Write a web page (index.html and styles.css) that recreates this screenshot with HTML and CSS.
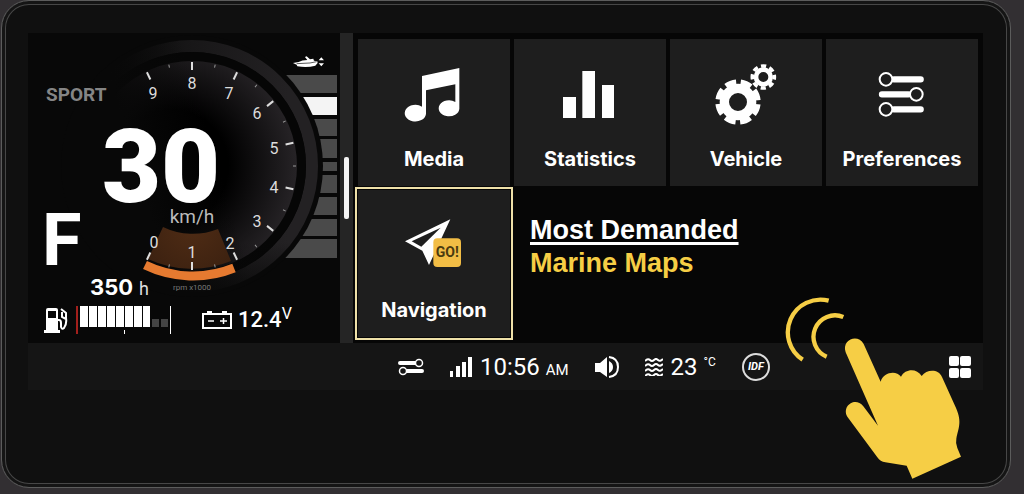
FILE: index.html
```html
<!DOCTYPE html>
<html lang="en">
<head>
  <meta charset="UTF-8">
  <meta name="viewport" content="width=device-width, initial-scale=1">
  <title>Marine Display</title>
  <link rel="stylesheet" href="styles.css">
</head>
<body>

<div class="device">
  <div class="screen">
    <div class="main">

      <!-- Instrument cluster -->
      <section class="cluster">
        <svg class="gauge" viewBox="-164 -133 312 310">
          <defs>
            <radialGradient id="dial" gradientUnits="userSpaceOnUse" cx="-20" cy="0" r="125">
              <stop offset="0.45" stop-color="#000"/>
              <stop offset="1" stop-color="#262326"/>
            </radialGradient>
            <linearGradient id="ring" x1="0" x2="1" y1="0" y2="0">
              <stop offset="0.15" stop-color="#080808"/>
              <stop offset="0.5" stop-color="#181718"/>
              <stop offset="0.9" stop-color="#232123"/>
            </linearGradient>
            <linearGradient id="fade" x1="0" x2="1" y1="0.3" y2="0">
              <stop offset="0.2" stop-color="#080808"/>
              <stop offset="0.5" stop-color="#080808" stop-opacity="0"/>
            </linearGradient>
            <linearGradient id="fadeBottom" x1="0" x2="0" y1="0" y2="1">
              <stop offset="0.8" stop-color="#080808" stop-opacity="0"/>
              <stop offset="1" stop-color="#080808" stop-opacity="0.8"/>
            </linearGradient>
            <radialGradient id="redzone" gradientUnits="userSpaceOnUse" cx="0" cy="60" r="55">
              <stop offset="0" stop-color="#4f2c15"/>
              <stop offset="1" stop-color="#3c2110"/>
            </radialGradient>
          </defs>

          <!-- trim levels -->
          <g fill="#4a4a4a">
            <rect x="60" y="-91" width="85" height="18"/>
            <rect x="60" y="-69" width="85" height="18" fill="#f4f4f4"/>
            <rect x="60" y="-47" width="85" height="17"/>
            <rect x="60" y="-27" width="85" height="19"/>
            <rect x="60" y="-4" width="85" height="9"/>
            <rect x="60" y="9" width="85" height="18"/>
            <rect x="60" y="31" width="85" height="18"/>
            <rect x="60" y="53" width="85" height="17"/>
            <rect x="60" y="73" width="85" height="19"/>
          </g>
          <g transform="translate(-164 -134) scale(0.3333)" fill="#fff">
            <path d="M795 93 L812 90 Q822 84 838 84 L831 75 L836 73 L846 82 L856 80 L858 86 L868 88 L869 93 L862 101 Q838 108 808 103 L806 98 Z"/>
            <path d="M806 95 L846 93 L866 89" stroke="#080808" stroke-width="2" fill="none"/>
            <path d="M872 85 L880 76 L888 85 Z M872 94 L880 103 L888 94 Z"/>
          </g>

          <!-- dial -->
          <circle r="131" fill="#080808"/>
          <circle r="120" fill="none" stroke="url(#ring)" stroke-width="12"/>
          <circle r="114" fill="#060606"/>
          <circle r="105" fill="url(#dial)"/>
          <circle r="127" fill="url(#fade)"/>
          <circle r="127" fill="url(#fadeBottom)"/>
          <path d="M-29 61 A68 68 0 0 0 26 63 L39 95 A103 103 0 0 1 -44 93 Z" fill="url(#redzone)"/>
          <path d="M-47 99 A110 110 0 0 0 42 102" fill="none" stroke="#e67a30" stroke-width="9"/>

          <g stroke="#ddd" stroke-width="2">
            <path d="M0 -104 V-96" transform="rotate(-25.7)"/>
            <path d="M0 -104 V-96"/>
            <path d="M0 -104 V-96" transform="rotate(25.7)"/>
            <path d="M0 -104 V-96" transform="rotate(51.4)"/>
            <path d="M0 -104 V-96" transform="rotate(77.1)"/>
            <path d="M0 -104 V-96" transform="rotate(102.9)"/>
            <path d="M0 -104 V-96" transform="rotate(128.6)"/>
            <path d="M0 -104 V-96" transform="rotate(154.3)"/>
            <path d="M0 -104 V-96" transform="rotate(180)"/>
            <path d="M0 -104 V-96" transform="rotate(205.7)"/>
          </g>
          <g stroke="#999" stroke-width="1">
            <path d="M0 -104 V-101" transform="rotate(-12.9)"/>
            <path d="M0 -104 V-101" transform="rotate(12.9)"/>
            <path d="M0 -104 V-101" transform="rotate(38.6)"/>
            <path d="M0 -104 V-101" transform="rotate(64.3)"/>
            <path d="M0 -104 V-101" transform="rotate(90)"/>
            <path d="M0 -104 V-101" transform="rotate(115.7)"/>
            <path d="M0 -104 V-101" transform="rotate(141.4)"/>
            <path d="M0 -104 V-101" transform="rotate(167.1)"/>
            <path d="M0 -104 V-101" transform="rotate(192.9)"/>
          </g>
          <g class="dial-number">
            <text x="-39" y="-67">9</text>
            <text x="0" y="-77">8</text>
            <text x="37" y="-67">7</text>
            <text x="65" y="-47">6</text>
            <text x="82" y="-12">5</text>
            <text x="82" y="27">4</text>
            <text x="65" y="61">3</text>
            <text x="38" y="83">2</text>
            <text x="0" y="92">1</text>
            <text x="-38" y="82">0</text>
          </g>
          <text class="dial-scale" x="0" y="124">rpm x1000</text>
          <text class="speed" x="-31" y="36">30</text>
          <text class="speed-unit" x="0" y="57">km/h</text>
        </svg>

        <div class="readouts">
          <div class="mode">SPORT</div>
          <div class="gear">F</div>
          <div class="range"><strong>350</strong> <span>h</span></div>
          <div class="levels">
            <svg class="fuel-icon" viewBox="0 0 24 26" width="24" height="26">
              <path d="M2 24 V3 Q2 1 4 1 H12 Q14 1 14 3 V24 Z M0 23 H16 V26 H0 Z" fill="#fff"/>
              <rect x="4" y="4" width="8" height="7" fill="#080808"/>
              <path d="M14 13 H15 Q17 13 17 16 V20 Q18 23 20 21 Q23 17 22 11 V6 L17 2 M18 5 V10 L22 12" fill="none" stroke="#fff" stroke-width="2"/>
            </svg>
            <svg class="fuel-bar" viewBox="0 0 96 28" width="96" height="28">
              <rect width="2" height="28" fill="#a3201c"/>
              <g fill="#fff">
                <rect x="4" width="8" height="21"/>
                <rect x="13" width="8" height="21"/>
                <rect x="22" width="8" height="21"/>
                <rect x="31" width="8" height="21"/>
                <rect x="40" width="8" height="21"/>
                <rect x="49" width="8" height="21"/>
                <rect x="58" width="8" height="21"/>
                <rect x="67" width="7" height="21"/>
                <rect x="48" y="24" width="1" height="4"/>
                <rect x="94" width="1" height="28"/>
              </g>
              <rect x="76" y="13" width="7" height="8" fill="#444"/>
              <rect x="85" y="13" width="7" height="8" fill="#444"/>
            </svg>
            <svg class="battery-icon" viewBox="0 0 30 20" width="30" height="20">
              <path d="M1 4 H29 V18 H1 Z M5 2 H10 M20 2 H25" fill="none" stroke="#fff" stroke-width="2"/>
              <path d="M6 11 H12 M18 11 H25 M21.500 8 V14" stroke="#fff" stroke-width="1.500"/>
            </svg>
            <div class="volts">12.4<sup>V</sup></div>
          </div>
        </div>
      </section>

      <div class="scroll-track"><div class="scroll-thumb"></div></div>

      <!-- App tiles -->
      <nav class="tiles">
        <a class="tile" href="#media">
          <svg class="tile-icon" viewBox="162 99 180 180">
            <path d="M216 132 L328 108 V230 A31 24 0 1 1 316 210 V157 L228 175 V246 A32 25 0 1 1 216 224 Z" fill="#fff"/>
          </svg>
          <span>Media</span>
        </a>
        <a class="tile" href="#statistics">
          <svg class="tile-icon" viewBox="630 99 180 180" fill="#fff">
            <rect x="639" y="195" width="39" height="63"/>
            <rect x="697" y="117" width="38" height="141"/>
            <rect x="756" y="159" width="36" height="99"/>
          </svg>
          <span>Statistics</span>
        </a>
        <a class="tile" href="#vehicle">
          <svg class="tile-icon" viewBox="156 99 180 180" fill="none" stroke="#fff">
            <circle cx="222" cy="210" r="41" stroke-width="28"/>
            <circle cx="222" cy="210" r="60" stroke-width="16" pathLength="80" stroke-dasharray="7 3" stroke-dashoffset="-1.5"/>
            <circle cx="298" cy="135" r="22" stroke-width="14"/>
            <circle cx="298" cy="135" r="33" stroke-width="11" pathLength="80" stroke-dasharray="6 4" stroke-dashoffset="3"/>
          </svg>
          <span>Vehicle</span>
        </a>
        <a class="tile" href="#preferences">
          <svg class="tile-icon" viewBox="624 99 180 180" fill="none" stroke="#fff">
            <path d="M690 142 H770 M654 187 H733 M690 232 H770" stroke-width="19" stroke-linecap="round"/>
            <g fill="#1e1e1e" stroke-width="6">
              <circle cx="666" cy="142" r="19"/>
              <circle cx="757" cy="187" r="19"/>
              <circle cx="666" cy="232" r="19"/>
            </g>
          </svg>
          <span>Preferences</span>
        </a>
        <a class="tile tile-active" href="#navigation">
          <svg class="tile-icon" viewBox="162 108 180 180">
            <path d="M165 184 L301 118 L237 255 L217 212 Z" fill="#fff"/>
            <path d="M185 184 L272 143 L214 200 Z" fill="#1e1e1e"/>
            <rect x="250" y="175" width="83" height="86" rx="12" fill="#f2bd45"/>
            <text class="go" x="292" y="232">GO!</text>
          </svg>
          <span>Navigation</span>
        </a>
        <div class="promo">
          <p class="promo-title">Most Demanded</p>
          <p class="promo-name">Marine Maps</p>
        </div>
      </nav>
    </div>

    <!-- Status bar -->
    <footer class="status">
      <svg viewBox="0 0 26 18" width="26" height="18" fill="none" stroke="#fff">
        <path d="M2 5 H18 M8 13 H24" stroke-width="4" stroke-linecap="round"/>
        <g fill="#151515" stroke-width="1.500">
          <circle cx="21" cy="5" r="3.500"/>
          <circle cx="5" cy="13" r="3.500"/>
        </g>
      </svg>
      <div class="status-group">
        <svg viewBox="0 0 22 20" width="22" height="20" fill="#fff">
          <rect y="14" width="3" height="6"/>
          <rect x="6" y="9" width="4" height="11"/>
          <rect x="12" y="5" width="4" height="15"/>
          <rect x="18" width="4" height="20"/>
        </svg>
        <div class="clock">10:56 <small>AM</small></div>
      </div>
      <svg viewBox="0 0 24 22" width="24" height="22">
        <path d="M0 7 H5 L12 1 V21 L5 16 H0 Z M14 5 Q18 7 18 11 Q18 15 14 17 Z" fill="#fff"/>
        <path d="M14 1 Q23 2 23 11 Q23 20 14 21" fill="none" stroke="#fff" stroke-width="2"/>
      </svg>
      <div class="status-group status-water">
        <svg viewBox="0 0 18 18" width="18" height="18" fill="none" stroke="#fff" stroke-width="2">
          <path d="M0 3 Q3 0 5 2 T9 2 T13 2 T18 1"/>
          <path d="M0 8 Q3 5 5 7 T9 7 T13 7 T18 6"/>
          <path d="M0 13 Q3 10 5 12 T9 12 T13 12 T18 11"/>
          <path d="M0 18 Q3 15 5 17 T9 17 T13 17 T18 16"/>
        </svg>
        <div class="temp">23 <sup>°C</sup></div>
      </div>
      <div class="idf">IDF</div>
      <button class="apps" type="button" aria-label="Apps">
        <svg viewBox="0 0 22 22" width="22" height="22" fill="#fff">
          <rect width="10" height="10" rx="2"/>
          <rect x="11" width="11" height="10" rx="2"/>
          <rect y="12" width="10" height="10" rx="2"/>
          <rect x="11" y="12" width="11" height="10" rx="2"/>
        </svg>
      </button>
    </footer>
  </div>

  <!-- Tapping hand -->
  <svg class="hand" viewBox="42 39 546 570">
    <path d="M176 62 A98 98 0 0 0 98 239 M220 111 A64 64 0 0 0 170 230" fill="none" stroke="#f6ce45" stroke-width="13"/>
    <path d="M227 217 C214 178 264 160 281 192 L332 305 C340 277 378 270 393 290 C406 266 440 264 455 288 C470 268 505 266 516 291 L554 375 C578 425 566 440 559 476 Q556 490 562 504 L573 530 L427 596 L410 557 L346 547 Q331 545 322 532 L232 410 C214 378 256 348 280 379 L324 437 Z" fill="#f6ce45"/>
  </svg>
</div>

</body>
</html>
```
FILE: styles.css
```css
* {
  box-sizing: border-box;
}
body {
  margin: 0;
  background: #322f32;
  color: #fff;
  font-family: Roboto, Arial, sans-serif;
}
.device {
  position: relative;
  margin: 0 13px 6px 1px;
  padding: 32px 27px 97px 26px;
  background: #101010;
  border: 1px solid #5c5c5c;
  border-radius: 28px;
  box-shadow: inset 0 0 0 3px #151515, inset 0 0 0 4px #474747;
}
.screen {
  background: #060606;
}
.main {
  display: flex;
}

/* Instrument cluster */
.cluster {
  position: relative;
  flex: 0 0 312px;
  background: #080808;
}
.gauge {
  position: absolute;
  top: 0;
  left: 0;
  width: 100%;
  height: 100%;
}
.gauge text {
  fill: #fff;
  text-anchor: middle;
}
.gauge .dial-number text {
  font-size: 16px;
  fill: #ddd;
}
.gauge .dial-scale {
  font-size: 8px;
  fill: #777;
}
.gauge .speed {
  font-size: 102px;
  font-weight: 900;
}
.gauge .speed-unit {
  font-size: 19px;
  fill: #bbb;
}
.readouts {
  position: relative;
  padding: 52px 12px 8px 14px;
}
.mode {
  padding-left: 4px;
  font-size: 19px;
  font-weight: 700;
  line-height: 20px;
  color: #858585;
}
.gear {
  margin-top: 108px;
  font-size: 72px;
  font-weight: 700;
  line-height: 56px;
}
.range {
  display: flex;
  align-items: baseline;
  gap: 6px;
  height: 24px;
  margin-top: 6px;
  padding-left: 48px;
  font-size: 18px;
  line-height: 24px;
  color: #ddd;
}
.range strong {
  font-family: Inter, Arial, sans-serif;
  font-size: 22px;
  color: #fff;
}
.levels {
  display: flex;
  align-items: center;
  height: 30px;
  margin-top: 6px;
}
.fuel-icon {
  margin: 0 8px 0 2px;
}
.battery-icon {
  margin: 0 6px 0 30px;
}
.volts {
  font-size: 22px;
  font-weight: 500;
  line-height: 24px;
}
.volts sup {
  font-size: 16px;
  font-weight: 400;
  line-height: 0;
}

.scroll-track {
  flex: 0 0 13px;
  padding: 124px 4px 0;
  background: #252525;
}
.scroll-thumb {
  height: 62px;
  border-radius: 2px;
  background: #f4f4f4;
}

/* Tiles */
.tiles {
  flex: 1;
  display: grid;
  grid-template-columns: repeat(4, 1fr);
  gap: 4px;
  padding: 6px 5px;
}
.tile {
  display: flex;
  flex-direction: column;
  align-items: center;
  padding: 26px 0 15px;
  background: #1e1e1e;
  color: #fff;
  font-family: Inter, Arial, sans-serif;
  font-size: 20px;
  font-weight: 700;
  line-height: 24px;
  text-decoration: none;
}
.tile-active {
  outline: 2px solid #eee0a8;
  outline-offset: 1px;
}
.tile-icon {
  width: 60px;
  height: 60px;
  margin-bottom: 22px;
  overflow: visible;
}
.go {
  font-family: Roboto, Arial, sans-serif;
  font-size: 42px;
  font-weight: 700;
  fill: #4a3a10;
  text-anchor: middle;
}
.promo {
  grid-column: span 3;
  padding: 24px 16px;
  font-family: "Liberation Sans", Arial, sans-serif;
  font-size: 27px;
  font-weight: 700;
  line-height: 33px;
}
.promo p {
  margin: 0;
}
.promo-title {
  text-decoration: underline;
  text-decoration-thickness: 3px;
  text-underline-offset: 3px;
  text-decoration-skip-ink: none;
}
.promo-name {
  color: #f6ce45;
}

/* Status bar */
.status {
  display: flex;
  align-items: center;
  gap: 26px;
  height: 47px;
  padding: 0 12px 0 370px;
  background: #151515;
}
.status-group {
  display: flex;
  align-items: center;
  gap: 8px;
}
.clock,
.temp {
  height: 28px;
  font-size: 24px;
  line-height: 28px;
}
.clock small {
  font-size: 15px;
}
.temp sup {
  font-size: 12px;
  line-height: 0;
}
.idf {
  width: 28px;
  height: 28px;
  border: 2px solid #ddd;
  border-radius: 50%;
  font-size: 11px;
  font-style: italic;
  font-weight: 700;
  line-height: 24px;
  text-align: center;
}
.apps {
  display: flex;
  margin-left: auto;
  padding: 0;
  border: 0;
  background: none;
}

.hand {
  position: absolute;
  right: 44px;
  bottom: 4px;
  width: 182px;
  height: 190px;
}
```
